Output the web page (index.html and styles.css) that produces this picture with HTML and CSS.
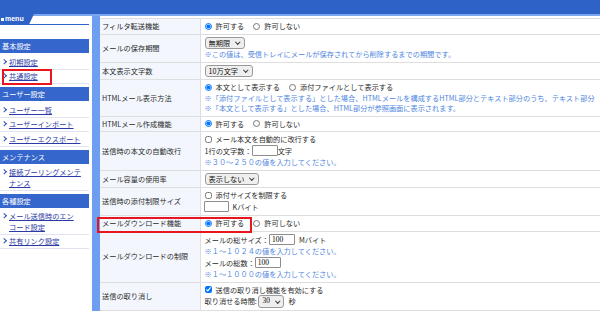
FILE: index.html
```html
<!DOCTYPE html>
<html lang="ja">
<head>
    <meta charset="UTF-8">
    <meta name="viewport" content="width=device-width, initial-scale=1.0">
    <title>共通設定</title>
    <link rel="stylesheet" href="styles.css">
</head>
<body>
    <div class="top-bar"></div>
    <div class="layout">
        <div class="side">
            <div class="menu-tab"><span class="menu-dot"></span>menu</div>
            <div class="menu-line"></div>

            <div class="side-head">基本設定</div>
            <ul class="side-list">
                <li><a href="#">初期設定</a></li>
                <li><a href="#">共通設定</a></li>
            </ul>
            <div class="side-head">ユーザー設定</div>
            <ul class="side-list">
                <li><a href="#">ユーザー一覧</a></li>
                <li><a href="#">ユーザーインポート</a></li>
                <li><a href="#">ユーザーエクスポート</a></li>
            </ul>
            <div class="side-head">メンテナンス</div>
            <ul class="side-list">
                <li><a href="#">接続プーリングメンテナンス</a></li>
            </ul>
            <div class="side-head">各種設定</div>
            <ul class="side-list">
                <li><a href="#">メール送信時のエンコード設定</a></li>
                <li><a href="#">共有リンク設定</a></li>
            </ul>
        </div>

        <div class="main">
            <table class="setting">
                <colgroup><col class="col-label"><col></colgroup>
                <tr>
                    <th>フィルタ転送機能</th>
                    <td>
                        <div class="ln">
                            <label class="opt"><input type="radio" name="filter" checked>許可する</label>
                            <label class="opt"><input type="radio" name="filter">許可しない</label>
                        </div>
                    </td>
                </tr>
                <tr>
                    <th>メールの保存期間</th>
                    <td>
                        <div class="ln ctl"><span class="sel-box"><select class="sel"><option>無期限</option></select></span></div>
                        <div class="ln note">※この値は、受信トレイにメールが保存されてから削除するまでの期間です。</div>
                    </td>
                </tr>
                <tr>
                    <th>本文表示文字数</th>
                    <td>
                        <div class="ln ctl"><span class="sel-box"><select class="sel"><option>10万文字</option></select></span></div>
                    </td>
                </tr>
                <tr>
                    <th>HTMLメール表示方法</th>
                    <td>
                        <div class="ln">
                            <label class="opt"><input type="radio" name="html-view" checked>本文として表示する</label>
                            <label class="opt"><input type="radio" name="html-view">添付ファイルとして表示する</label>
                        </div>
                        <div class="ln note">※「添付ファイルとして表示する」とした場合、HTMLメールを構成するHTML部分とテキスト部分のうち、テキスト部分</div>
                        <div class="ln note">※「本文として表示する」とした場合、HTML部分が参照画面に表示されます。</div>
                    </td>
                </tr>
                <tr>
                    <th>HTMLメール作成機能</th>
                    <td>
                        <div class="ln">
                            <label class="opt"><input type="radio" name="html-make" checked>許可する</label>
                            <label class="opt"><input type="radio" name="html-make">許可しない</label>
                        </div>
                    </td>
                </tr>
                <tr>
                    <th>送信時の本文の自動改行</th>
                    <td>
                        <div class="ln"><label class="opt"><input type="checkbox">メール本文を自動的に改行する</label></div>
                        <div class="ln ctl">1行の文字数：<input type="text" class="num">文字</div>
                        <div class="ln note">※３０～２５０の値を入力してください。</div>
                    </td>
                </tr>
                <tr>
                    <th>メール容量の使用率</th>
                    <td>
                        <div class="ln ctl"><span class="sel-box"><select class="sel"><option>表示しない</option></select></span></div>
                    </td>
                </tr>
                <tr>
                    <th>送信時の添付制限サイズ</th>
                    <td>
                        <div class="ln"><label class="opt"><input type="checkbox">添付サイズを制限する</label></div>
                        <div class="ln ctl"><input type="text" class="num num-wide"><span class="unit">Kバイト</span></div>
                    </td>
                </tr>
                <tr>
                    <th>メールダウンロード機能</th>
                    <td>
                        <div class="ln">
                            <label class="opt"><input type="radio" name="download" checked>許可する</label>
                            <label class="opt"><input type="radio" name="download">許可しない</label>
                        </div>
                    </td>
                </tr>
                <tr>
                    <th>メールダウンロードの制限</th>
                    <td>
                        <div class="ln ctl">メールの総サイズ：<input type="text" class="num" value="100"><span class="unit">Mバイト</span></div>
                        <div class="ln note">※１～１０２４の値を入力してください。</div>
                        <div class="ln ctl">メールの総数：<input type="text" class="num" value="100"></div>
                        <div class="ln note">※１～１０００の値を入力してください。</div>
                    </td>
                </tr>
                <tr>
                    <th>送信の取り消し</th>
                    <td>
                        <div class="ln"><label class="opt"><input type="checkbox" checked>送信の取り消し機能を有効にする</label></div>
                        <div class="ln ctl">取り消せる時間:&nbsp;<span class="sel-box"><select class="sel sel-num"><option>30</option></select></span><span class="unit">秒</span></div>
                    </td>
                </tr>
            </table>
        </div>
    </div>

    <!-- 注目箇所の赤枠 -->
    <div class="mark mark-side"></div>
    <div class="mark mark-download"></div>
</body>
</html>
```

FILE: styles.css
```css
body {
    margin: 0;
    overflow: hidden;
    background-color: #ffffff;
    font-family: "Noto Sans CJK JP", sans-serif;
    font-size: 7.2px;
    color: #2b2b2b;
    position: relative;
    min-height: 321px;
}
.top-bar {
    height: 14px;
    background-color: #2f62c6;
    border-bottom: 2px solid #7ba6ee;
}
.layout {
    display: flex;
    gap: 3px;
    align-items: flex-start;
}

/* sidebar */
.side {
    width: 89px;
    flex: none;
}
.menu-tab {
    margin-top: -2px;
    width: 34px;
    height: 10px;
    padding-left: 1px;
    box-sizing: border-box;
    background-color: #2f62c6;
    color: #ffffff;
    font: bold 7px/10px "Liberation Sans", Arial, sans-serif;
    display: flex;
    align-items: center;
    gap: 1px;
    clip-path: polygon(0 0, 100% 0, 86% 100%, 0 100%);
}
.menu-dot {
    width: 3px;
    height: 3px;
    background-color: #ffffff;
}
.menu-line {
    height: 1px;
    background-color: #2f62c6;
    margin-bottom: 14px;
}
.side-head {
    height: 14px;
    line-height: 14px;
    padding-left: 2px;
    background-color: #3466cc;
    color: #ffffff;
}
.side-list {
    list-style: none;
    margin: 2px 0 3px;
    padding: 0;
    line-break: strict;
}
.side-list li {
    position: relative;
    padding: 1.5px 4px 1.5px 9px;
    line-height: 10.5px;
    border-bottom: 1px solid #dfe4ee;
}
.side-list li::before {
    content: "";
    position: absolute;
    left: 2px;
    top: 4.5px;
    width: 2.5px;
    height: 2.5px;
    border-right: 1.5px solid #2a4fb8;
    border-bottom: 1.5px solid #2a4fb8;
    transform: rotate(-45deg);
}
.side-list a {
    color: #2b3aa6;
}

/* main table */
.main {
    flex: 1;
    min-width: 0;
    padding-top: 2px;
    border-left: 8px solid #6e9ef0;
}
.setting {
    width: 100%;
    border-collapse: collapse;
    table-layout: fixed;
}
.col-label {
    width: 100px;
}
.setting th,
.setting td {
    border-top: 1px solid #dedede;
    border-bottom: 1px solid #dedede;
    padding: 2px 3px;
    vertical-align: middle;
    text-align: left;
    font-weight: normal;
}
.setting th {
    padding-left: 2px;
    background-color: #f3f7fd;
    line-height: 10.5px;
    white-space: nowrap;
}
.setting td {
    border-left: 1px solid #dedede;
    padding-left: 4px;
}
.ln {
    height: 10.5px;
    line-height: 10.5px;
    display: flex;
    align-items: center;
    white-space: nowrap;
}
.ln.ctl {
    height: 12.5px;
}
.note {
    color: #4f86e0;
}
.opt {
    display: flex;
    align-items: center;
}
.opt + .opt {
    margin-left: 9px;
}
.opt input {
    width: 7px;
    height: 7px;
    margin: 0 4px 0 0;
}
.sel-box {
    position: relative;
    display: inline-flex;
}
.sel-box::after {
    content: "";
    position: absolute;
    right: 5px;
    top: 3.5px;
    width: 2.5px;
    height: 2.5px;
    border-right: 1px solid #333333;
    border-bottom: 1px solid #333333;
    transform: rotate(45deg);
    pointer-events: none;
}
.sel {
    appearance: none;
    -webkit-appearance: none;
    height: 12.5px;
    margin: 0;
    padding: 0 13px 0 3px;
    font-family: "Noto Sans CJK JP", sans-serif;
    font-size: 7.2px;
    line-height: 10px;
    color: #111111;
    background-color: #efefef;
    border: 1px solid #9a9a9a;
    border-radius: 3px;
}
.sel-num {
    font-family: "Liberation Serif", serif;
    font-size: 7.5px;
}
.num {
    width: 26px;
    height: 11px;
    box-sizing: border-box;
    margin: 0;
    padding: 0 2px;
    font-family: "Liberation Serif", serif;
    font-size: 7.5px;
    border: 1px solid #8d8d8d;
    border-radius: 1px;
}
.num-wide {
    width: 25px;
    margin-left: -1px;
}
.unit {
    margin-left: 4px;
}

/* annotation boxes */
.mark {
    position: absolute;
    box-sizing: border-box;
    border: 2px solid #e8141e;
}
.mark-side {
    left: 2px;
    top: 69px;
    width: 50px;
    height: 16px;
}
.mark-download {
    left: 97px;
    top: 217px;
    width: 155px;
    height: 16px;
}
```
